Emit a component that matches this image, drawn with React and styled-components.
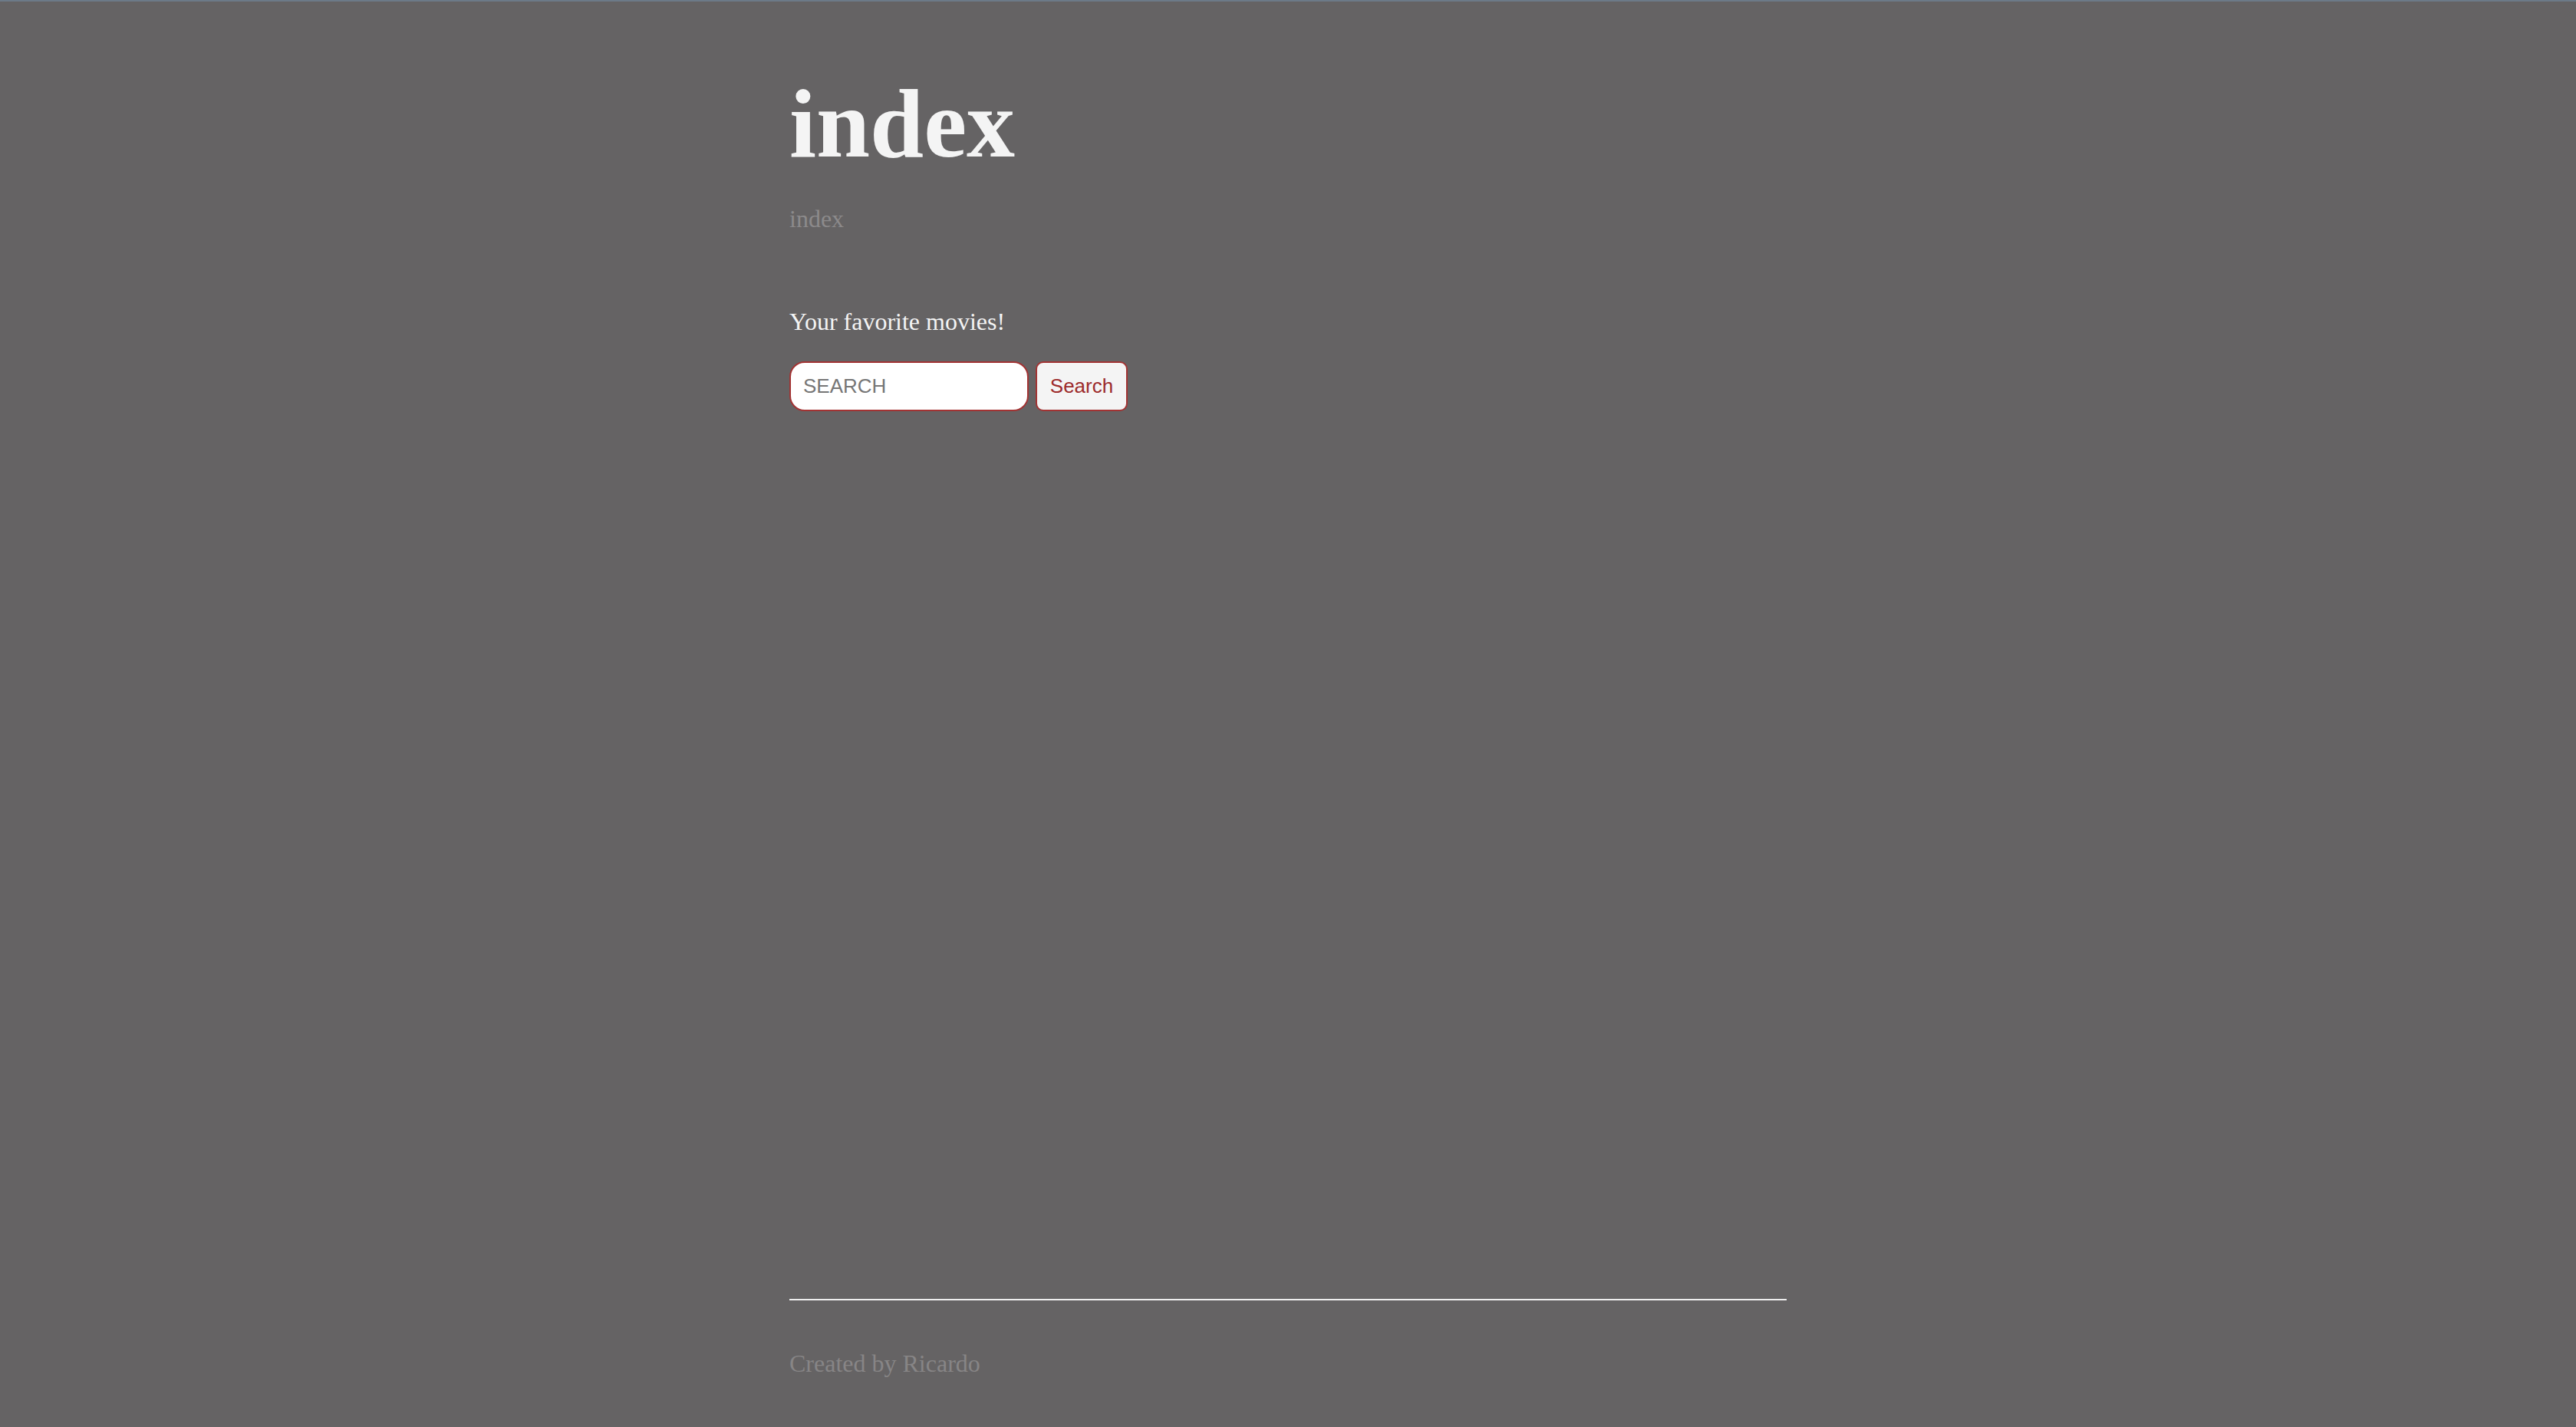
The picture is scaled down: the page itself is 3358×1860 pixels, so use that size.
import React from "react";
import styled, { createGlobalStyle } from "styled-components";

const GlobalStyle = createGlobalStyle`
  html, body {
    margin: 0;
    padding: 0;
    background: #656364;
  }
  body {
    font-family: "Liberation Serif", "Times New Roman", serif;
  }
`;

const Page = styled.div`
  min-height: 100vh;
  box-sizing: border-box;
  border-top: 2px solid #6c7a88;
  display: flex;
  flex-direction: column;
`;

const Container = styled.div`
  width: 100%;
  max-width: 1300px;
  margin: 0 auto;
`;

const Main = styled(Container)`
  flex: 1;
  padding-top: 97px;
`;

const Title = styled.h1`
  margin: 0;
  font-size: 126px;
  line-height: 126px;
  font-weight: bold;
  color: #f4f4f4;
`;

const Subtitle = styled.div`
  margin-top: 44px;
  font-size: 32px;
  line-height: 32px;
  color: #8c8a8b;
`;

const Intro = styled.p`
  margin: 102px 0 0;
  font-size: 32px;
  line-height: 32px;
  color: #f4f4f4;
`;

const SearchForm = styled.form`
  display: flex;
  gap: 9px;
  margin-top: 36px;
`;

const SearchInput = styled.input`
  width: 312px;
  height: 65px;
  box-sizing: border-box;
  padding: 0 16px;
  border: 2px solid #a23333;
  border-radius: 20px;
  background: #ffffff;
  font-family: "Liberation Sans", Arial, sans-serif;
  font-size: 26px;
  color: #333;
  outline: none;
  &::placeholder {
    color: #767676;
  }
`;

const SearchButton = styled.button`
  width: 120px;
  height: 65px;
  box-sizing: border-box;
  padding: 0;
  border: 2px solid #a23333;
  border-radius: 10px;
  background: #f4f4f4;
  color: #9d2b2b;
  font-family: "Liberation Sans", Arial, sans-serif;
  font-size: 26px;
  cursor: pointer;
`;

const Footer = styled(Container)`
  padding-bottom: 67px;
`;

const Rule = styled.div`
  height: 2px;
  background: #eeeeee;
`;

const Credit = styled.div`
  margin-top: 66px;
  font-size: 32px;
  line-height: 32px;
  color: #878586;
`;

export default function App() {
  return (
    <>
      <GlobalStyle />
      <Page>
        <Main>
          <Title>index</Title>
          <Subtitle>index</Subtitle>
          <Intro>Your favorite movies!</Intro>
          <SearchForm onSubmit={e => e.preventDefault()}>
            <SearchInput type="text" placeholder="SEARCH" />
            <SearchButton type="submit">Search</SearchButton>
          </SearchForm>
        </Main>
        <Footer>
          <Rule />
          <Credit>Created by Ricardo</Credit>
        </Footer>
      </Page>
    </>
  );
}
